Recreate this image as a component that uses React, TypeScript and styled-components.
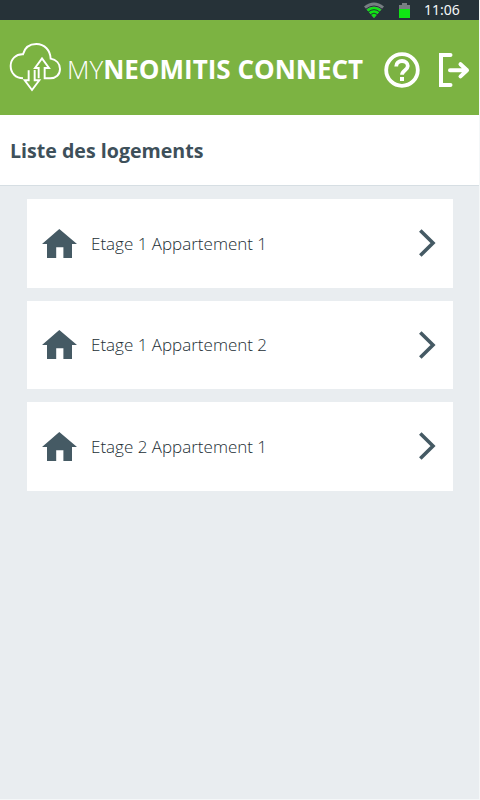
import React from "react";
import styled, { createGlobalStyle } from "styled-components";

const GlobalStyle = createGlobalStyle`
  * { box-sizing: border-box; }
  body { margin: 0; background: #e9edf0; font-family: "Open Sans", "Noto Sans", sans-serif; }
`;

const Screen = styled.div`
  width: 480px;
  height: 800px;
  display: flex;
  flex-direction: column;
  background: #e9edf0;
  border-right: 1px solid #f4f7f8;
  border-bottom: 1px solid #f4f7f8;
  overflow: hidden;
`;

const StatusBar = styled.div`
  height: 20px;
  flex: none;
  display: flex;
  align-items: center;
  justify-content: flex-end;
  gap: 15px;
  padding-right: 19px;
  background: #263238;
`;

const Clock = styled.span`
  width: 36px;
  margin-left: -1px;
  font: 400 14px/20px "Noto Sans", sans-serif;
  color: #f5f7f8;
  white-space: nowrap;
`;

const Header = styled.header`
  height: 95px;
  flex: none;
  display: flex;
  align-items: center;
  padding: 0 9px 0 9px;
  background: #7cb342;
  color: #fff;
`;

const CloudLogo = styled.svg`
  flex: none;
  margin-top: -1px;
`;

const Brand = styled.h1`
  flex: 1;
  margin: 0 0 0 6px;
  padding-top: 2px;
  font-size: 26px;
  line-height: 36px;
  font-weight: 700;
  white-space: nowrap;
`;

const Thin = styled.span`
  font-weight: 300;
`;

const HeaderActions = styled.div`
  display: flex;
  align-items: center;
  gap: 18px;
  padding-top: 5px;
`;

const IconButton = styled.button`
  display: flex;
  padding: 0;
  border: 0;
  background: none;
  color: inherit;
`;

const TitleBar = styled.div`
  height: 71px;
  flex: none;
  display: flex;
  align-items: center;
  padding: 2px 10px 0;
  background: #fff;
  border-bottom: 1px solid #d6dee3;
`;

const Title = styled.h2`
  margin: 0;
  font-size: 19.6px;
  line-height: 28px;
  font-weight: 700;
  color: #3e505a;
`;

const List = styled.main`
  display: flex;
  flex-direction: column;
  gap: 13px;
  padding: 13px 26px 0 27px;
`;

const Row = styled.div`
  height: 88.6px;
  display: flex;
  align-items: center;
  padding: 0 17px 0 15px;
  background: #fff;
  color: #455a64;
`;

const RowLabel = styled.span`
  flex: 1;
  margin-left: 14px;
  padding-top: 1px;
  font-size: 17px;
  line-height: 24px;
  color: #222e34;
  font-weight: 300;
`;

const homes = ["Etage 1 Appartement 1", "Etage 1 Appartement 2", "Etage 2 Appartement 1"];

export default function App() {
  return (
    <>
      <GlobalStyle />
      <Screen>
        <StatusBar>
          <svg width="20" height="16" viewBox="0 0 20 16">
            <path d="M0 4.5 Q10 -3.5 20 4.5 L10 16 Z" fill="#777f82" />
            <path d="M2.7 7.6 Q10 1.8 17.3 7.6 L10 16 Z" fill="#10e414" />
            <g fill="none" stroke="#263238" strokeWidth="1">
              <path d="M1.8 7.2 Q10 .8 18.2 7.2" />
              <path d="M4.2 10 Q10 5.4 15.8 10" />
              <path d="M6.4 12.6 Q10 9.6 13.6 12.6" />
            </g>
          </svg>
          <svg width="11" height="16" viewBox="0 0 11 16">
            <path d="M3 1h5v2h3v4H0V3h3z" fill="#777f82" />
            <path d="M0 7h11v9H0z" fill="#10e414" />
          </svg>
          <Clock>11:06</Clock>
        </StatusBar>
        <Header>
          <CloudLogo width="52" height="50" viewBox="27 36 156 150" fill="none" stroke="#fff" strokeWidth="5.8">
            <path d="M69 145C47 145 32 129 32 108c0-21 16-36 37-35 5-20 20-31 40-31 25 0 42 19 43 44 16 3 28 14 28 31 0 17-12 28-29 28h-17v-31h13l-21-29-21 29h11v31" />
            <path d="M86 121v30H74l22 29 22-29h-14v-31" />
          </CloudLogo>
          <Brand>
            <Thin>MY</Thin>NEOMITIS CONNECT
          </Brand>
          <HeaderActions>
            <IconButton aria-label="Aide">
              <svg width="36" height="36" viewBox="0 0 36 36" fill="none" stroke="#fff" strokeWidth="3.8">
                <circle cx="18" cy="18" r="15.8" />
                <path d="M12.2 14.4c0-3.2 2.5-5.4 5.8-5.4s5.8 2.2 5.8 5.1c0 4-5.8 4.2-5.8 8.7" />
                <path d="M16 25h4v4h-4z" fill="#fff" stroke="none" />
              </svg>
            </IconButton>
            <IconButton aria-label="Déconnexion">
              <svg width="32" height="34" viewBox="0 0 32 34" fill="none" stroke="#fff" strokeWidth="4" strokeLinecap="round">
                <path d="M12.5 2H3v30h9.5" />
                <path d="M12 17.3h17M22.5 11.2l6.5 6.1-6.5 6.1" strokeLinejoin="round" />
              </svg>
            </IconButton>
          </HeaderActions>
        </Header>
        <TitleBar>
          <Title>Liste des logements</Title>
        </TitleBar>
        <List>
          {homes.map((name) => (
            <Row key={name}>
              <svg width="35" height="29" viewBox="0 0 35 29">
                <path d="M17.3 0 35 15h-5v14h-8.6V18.3h-7.2V29H5V15H0z" fill="currentColor" />
              </svg>
              <RowLabel>{name}</RowLabel>
              <svg width="17" height="28" viewBox="0 0 17 28" fill="none" stroke="currentColor" strokeWidth="3.6">
                <path d="M1.3 1.5 14 14 1.3 26.5" />
              </svg>
            </Row>
          ))}
        </List>
      </Screen>
    </>
  );
}
